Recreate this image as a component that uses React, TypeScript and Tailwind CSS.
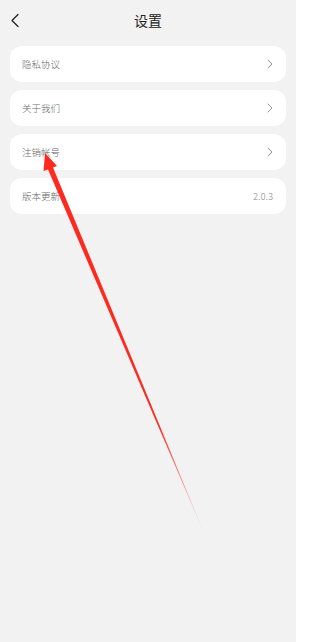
import React from 'react';

const font = { fontFamily: '"Noto Sans CJK SC", "Noto Sans", sans-serif' };

const Chevron = () => (
  <svg width="6" height="10" viewBox="0 0 6 10" fill="none">
    <path d="M1 1l4 4-4 4" stroke="#888" strokeWidth="0.9" strokeLinecap="round" strokeLinejoin="round" />
  </svg>
);

const Row = ({ label, value }: { label: string; value?: string }) => (
  <div className="flex h-[36px] items-center justify-between rounded-[12px] bg-white pl-[12px] pr-[13px]">
    <span className="text-[9.5px] font-light text-[#666]">{label}</span>
    {value ? <span className="text-[9.5px] font-light text-[#888]">{value}</span> : <Chevron />}
  </div>
);

export default function App() {
  return (
    <div className="relative h-[642px] w-[296px] overflow-hidden bg-[#f2f2f2]" style={font}>
      <div className="relative flex h-[40px] items-center justify-center">
        <svg className="absolute left-[10px] top-[13px]" width="10" height="15" viewBox="0 0 10 15" fill="none">
          <path d="M8 1.5L2 7.5l6 6" stroke="#222" strokeWidth="1.3" strokeLinecap="round" strokeLinejoin="round" />
        </svg>
        <span className="text-[14px] text-[#222]">设置</span>
      </div>
      <div className="mt-[6px] flex flex-col gap-[8px] px-[10px]">
        <Row label="隐私协议" />
        <Row label="关于我们" />
        <Row label="注销帐号" />
        <Row label="版本更新" value="2.0.3" />
      </div>
      <svg className="pointer-events-none absolute left-0 top-0" width="296" height="642" viewBox="0 0 296 642">
        <defs>
          <linearGradient id="fade" x1="44" y1="155" x2="207" y2="540" gradientUnits="userSpaceOnUse">
            <stop offset="0" stopColor="#ff2a1f" />
            <stop offset="0.7" stopColor="#ff2a1f" />
            <stop offset="1" stopColor="#ff2a1f" stopOpacity="0" />
          </linearGradient>
        </defs>
        <polygon points="45,153 57,166 53,167.5 207,540 48,169.5 43.5,171" fill="url(#fade)" />
      </svg>
    </div>
  );
}
